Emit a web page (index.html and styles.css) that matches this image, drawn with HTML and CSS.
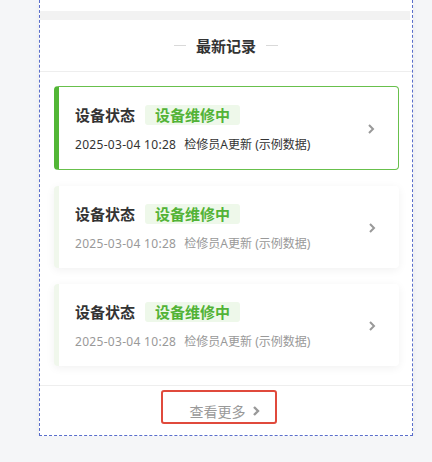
FILE: index.html
```html
<!DOCTYPE html>
<html lang="zh-CN">
<head>
    <meta charset="UTF-8">
    <meta name="viewport" content="width=device-width, initial-scale=1.0">
    <title>最新记录</title>
    <link rel="stylesheet" href="styles.css">
</head>
<body>
    <div class="panel">
        <div class="prev-card"></div>
        <div class="band"></div>

        <div class="section-head">
            <span class="dash"></span>
            <h2>最新记录</h2>
            <span class="dash"></span>
        </div>

        <div class="record-list">
            <div class="record active">
                <div class="record-body">
                    <div class="record-top">
                        <span class="record-title">设备状态</span>
                        <span class="badge">设备维修中</span>
                    </div>
                    <div class="record-meta">
                        <span class="time">2025-03-04 10:28</span>
                        <span>检修员A更新 (示例数据)</span>
                    </div>
                </div>
                <svg class="arrow" width="10" height="12" viewBox="0 0 10 12"><polyline points="3,2 7,6 3,10" fill="none" stroke="#999" stroke-width="2"/></svg>
            </div>

            <div class="record">
                <div class="record-body">
                    <div class="record-top">
                        <span class="record-title">设备状态</span>
                        <span class="badge">设备维修中</span>
                    </div>
                    <div class="record-meta">
                        <span class="time">2025-03-04 10:28</span>
                        <span>检修员A更新 (示例数据)</span>
                    </div>
                </div>
                <svg class="arrow" width="10" height="12" viewBox="0 0 10 12"><polyline points="3,2 7,6 3,10" fill="none" stroke="#999" stroke-width="2"/></svg>
            </div>

            <div class="record">
                <div class="record-body">
                    <div class="record-top">
                        <span class="record-title">设备状态</span>
                        <span class="badge">设备维修中</span>
                    </div>
                    <div class="record-meta">
                        <span class="time">2025-03-04 10:28</span>
                        <span>检修员A更新 (示例数据)</span>
                    </div>
                </div>
                <svg class="arrow" width="10" height="12" viewBox="0 0 10 12"><polyline points="3,2 7,6 3,10" fill="none" stroke="#999" stroke-width="2"/></svg>
            </div>
        </div>

        <div class="more-row">
            <button class="more-btn">查看更多
                <svg width="10" height="12" viewBox="0 0 10 12"><polyline points="3,2 7,6 3,10" fill="none" stroke="#999" stroke-width="2.4"/></svg>
            </button>
        </div>
    </div>
</body>
</html>
```

FILE: styles.css
```css
body {
    margin: 0;
    padding: 0;
    background-color: #f5f6f8;
    font-family: "Noto Sans", "Noto Sans CJK SC", sans-serif;
}

.panel {
    margin-left: 39px;
    width: 372px;
    background-color: #fff;
    border: 1px dashed #5a6ecb;
    border-top: none;
    box-shadow: 0 2px 6px rgba(0, 0, 0, 0.05);
}

.prev-card {
    height: 11px;
    margin-right: 2px;
    background-color: #fff;
}

.band {
    height: 9px;
    margin-right: 2px;
    background-color: #f2f2f2;
}

.section-head {
    height: 51px;
    display: flex;
    align-items: center;
    justify-content: center;
    gap: 10px;
    border-bottom: 1px solid #eee;
}

.section-head h2 {
    margin: 0;
    font-size: 15px;
    font-weight: bold;
    color: #333;
    font-family: "Noto Sans CJK SC", sans-serif;
}

.dash {
    width: 12px;
    height: 1px;
    background-color: #d9d9d9;
}

.record-list {
    padding: 14px 13px 19px 14px;
    display: flex;
    flex-direction: column;
    gap: 16px;
    border-bottom: 1px solid #eee;
}

.record {
    display: flex;
    align-items: center;
    padding: 17px 22px 15px 16px;
    border-left: 5px solid #f0f7ec;
    border-radius: 4px;
    background-color: #fff;
    box-shadow: 0 2px 10px rgba(0, 0, 0, 0.06);
}

.record.active {
    border: 1px solid #68c04c;
    border-left: 5px solid #52b636;
    box-shadow: none;
}

.record-body {
    flex: 1;
}

.record-top {
    display: flex;
    align-items: center;
    gap: 10px;
}

.record-title {
    font-size: 15px;
    font-weight: bold;
    color: #333;
    font-family: "Noto Sans CJK SC", sans-serif;
}

.badge {
    padding: 0 10px;
    height: 20px;
    line-height: 20px;
    font-size: 15px;
    font-weight: bold;
    color: #52b336;
    background-color: #eef8ea;
    border-radius: 3px;
    font-family: "Noto Sans CJK SC", sans-serif;
}

.record-meta {
    margin-top: 11px;
    font-size: 12px;
    line-height: 18px;
    color: #999;
}

.record.active .record-meta {
    color: #333;
}

.record-meta .time {
    margin-right: 5px;
    letter-spacing: 0.3px;
}

.arrow {
    flex-shrink: 0;
}

.more-row {
    display: flex;
    justify-content: center;
    padding: 4px 14px 11px 0;
}

.more-btn {
    width: 116px;
    height: 34px;
    padding: 8px 0 0 12px;
    display: flex;
    align-items: center;
    justify-content: center;
    gap: 5px;
    background: none;
    border: 2px solid #e04a3c;
    border-radius: 3px;
    font-size: 14px;
    color: #999;
    font-family: "Noto Sans", "Noto Sans CJK SC", sans-serif;
}
```
